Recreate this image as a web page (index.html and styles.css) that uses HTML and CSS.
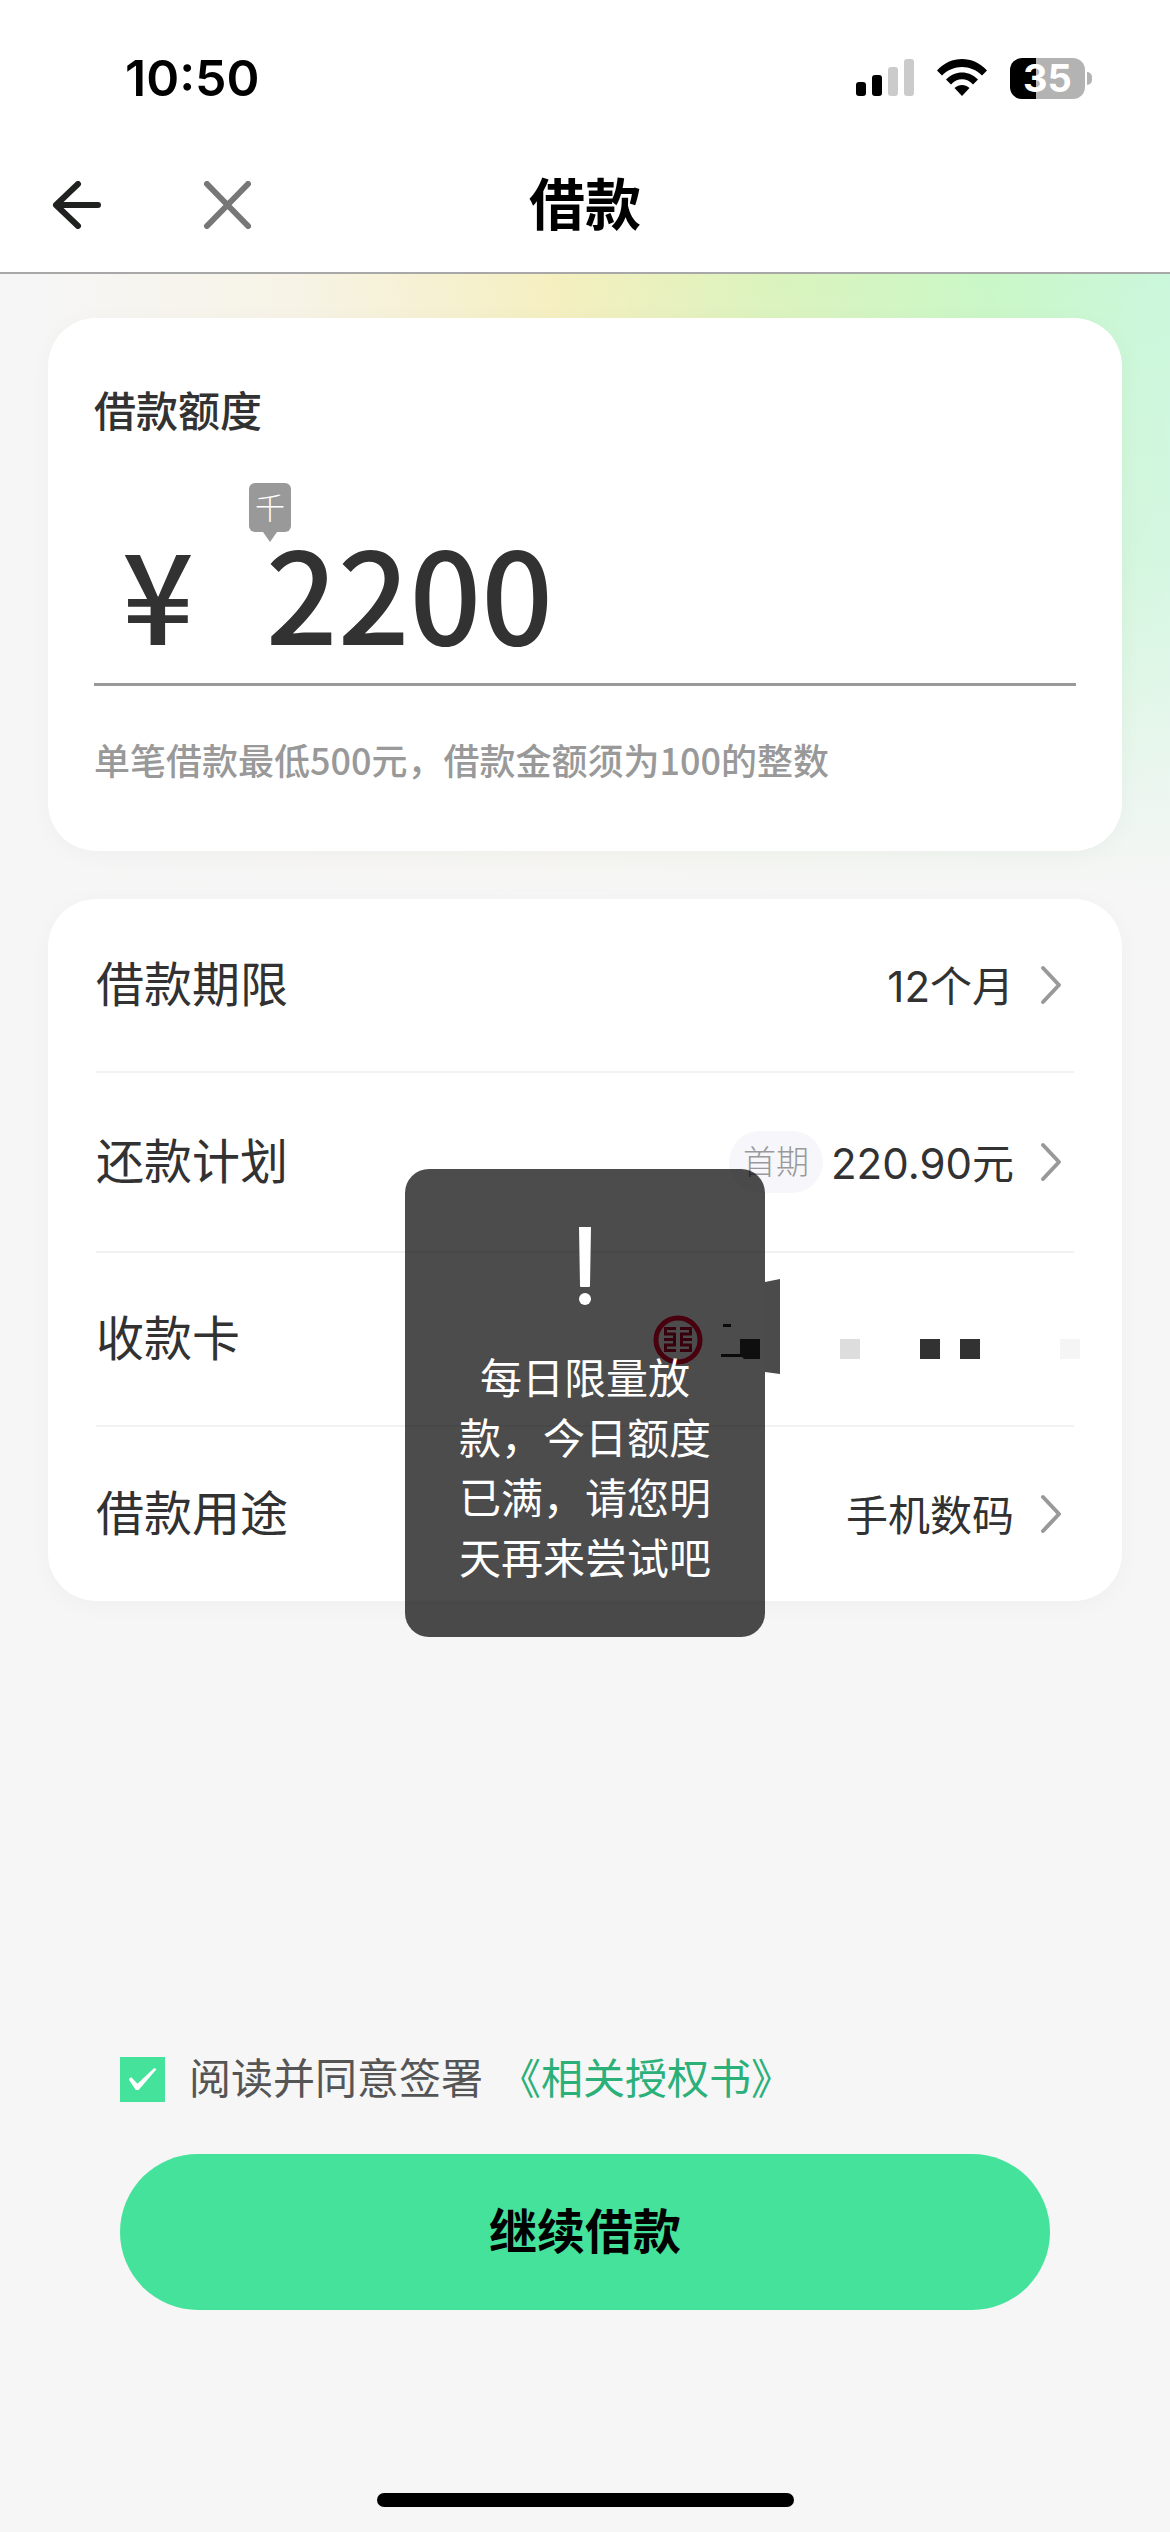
FILE: index.html
```
<!DOCTYPE html>
<html lang="zh-CN">
<head>
<meta charset="utf-8">
<meta name="viewport" content="width=device-width, initial-scale=1">
<title>借款</title>
<link rel="stylesheet" href="styles.css">
</head>
<body>
<header class="top">
  <div class="status">
    <span class="time">10:50</span>
    <div class="status-icons">
      <svg width="58" height="38" viewBox="0 0 58 38" role="img" aria-label="信号">
        <rect x="0" y="23" width="10" height="14" rx="3"/>
        <rect x="16" y="16" width="10" height="21" rx="3"/>
        <rect x="32" y="8" width="10" height="29" rx="3" fill="#cbcbcb"/>
        <rect x="48" y="0" width="10" height="37" rx="3" fill="#cbcbcb"/>
      </svg>
      <svg width="50" height="38" viewBox="0 0 50 38" role="img" aria-label="无线网络">
        <path d="M0 11.500C14-3.800 36-3.800 50 11.500L45 16.500C34 5 16 5 5 16.500Z"/>
        <path d="M9 20.500C18 11 32 11 41 20.500L36 25.500C30 18.500 20 18.500 14 25.500Z"/>
        <path d="M17.500 29C22 25 28 25 32.500 29L25 37Z"/>
      </svg>
      <div class="battery"><span>35</span></div>
    </div>
  </div>
  <nav class="nav">
    <div class="nav-actions">
      <button class="icon-button" aria-label="返回">
        <svg width="52" height="48" viewBox="0 0 52 48" fill="none" stroke="#202220" stroke-width="6" stroke-linecap="round" stroke-linejoin="round"><path d="M28 3 6 24 28 45M6 24H48"/></svg>
      </button>
      <button class="icon-button" aria-label="关闭">
        <svg width="48" height="48" viewBox="0 0 48 48" fill="none" stroke="#777" stroke-width="6" stroke-linecap="round"><path d="M4 3 45 45M45 3 4 45"/></svg>
      </button>
    </div>
    <h1 class="title">借款</h1>
  </nav>
</header>
<main class="page">
  <section class="card amount-card">
    <label class="amount-label" for="amount">借款额度</label>
    <div class="amount">
      <span class="yen">¥</span>
      <span class="unit">千</span>
      <input class="amount-input" id="amount" type="text" inputmode="numeric" value="2200">
    </div>
    <p class="hint">单笔借款最低500元，借款金额须为100的整数</p>
  </section>

  <section class="card">
    <button class="row">
      <span class="row-label">借款期限</span>
      <span class="row-value">12个月</span>
      <svg class="chevron" width="22" height="40" viewBox="0 0 22 40"><path d="M3 3 19 20 3 37"/></svg>
    </button>
    <button class="row row-tall">
      <span class="row-label">还款计划</span>
      <span class="tag">首期</span>
      <span class="row-value">220.90元</span>
      <svg class="chevron" width="22" height="40" viewBox="0 0 22 40"><path d="M3 3 19 20 3 37"/></svg>
    </button>
    <button class="row">
      <span class="row-label">收款卡</span>
      <svg class="bank" width="422" height="60" viewBox="0 0 422 60" role="img" aria-label="银行卡">
        <circle cx="26" cy="31" r="22" fill="none" stroke="#f20030" stroke-width="5"/>
        <path d="M24 19.500H13.500V25H22.500V36H13.500V41.500H24M12 30.500H22M28 19.500H38.500V25H29.500V36H38.500V41.500H28M30 30.500H40" fill="none" stroke="#b80028" stroke-width="3"/>
        <path d="M71 15H79V18H71ZM69 45H92V48H69Z" fill="#222"/>
        <path d="M88 30H108V50H92L88 46ZM268 30H288V50H268ZM308 30H328V50H308Z" fill="#323232"/>
        <path d="M188 30H208V50H188Z" fill="#ddd"/>
        <path d="M408 30H428V50H408Z" fill="#f5f5f5"/>
      </svg>
    </button>
    <button class="row">
      <span class="row-label">借款用途</span>
      <span class="row-value">手机数码</span>
      <svg class="chevron" width="22" height="40" viewBox="0 0 22 40"><path d="M3 3 19 20 3 37"/></svg>
    </button>
  </section>

  <footer class="bottom">
    <div class="agreement">
      <input class="check" id="agree" type="checkbox" checked>
      <label for="agree">阅读并同意签署</label>
      <a href="#agreement">《相关授权书》</a>
    </div>
    <button class="submit">继续借款</button>
    <div class="home-bar"></div>
  </footer>

  <div class="overlay">
    <div class="toast" role="alert">
      <svg width="14" height="80" viewBox="0 0 14 80" fill="#fff" aria-hidden="true"><path d="M1 1H13L12 60Q12 61 11 61H3Q2 61 2 60Z"/><circle cx="7" cy="73" r="6"/></svg>
      <p>每日限量放款，今日额度已满，请您明天再来尝试吧</p>
      <svg class="flap" width="15" height="95" viewBox="0 0 15 95" fill="#4b4b4b" aria-hidden="true"><path d="M0 3 15 0V95L0 93Z"/></svg>
    </div>
  </div>
</main>
</body>
</html>
```
FILE: styles.css
```
* {
  box-sizing: border-box;
}

body {
  margin: 0;
  min-height: 100vh;
  display: flex;
  flex-direction: column;
  background: #f6f6f6;
  color: #323232;
  font-family: Inter, "Noto Sans CJK SC", sans-serif;
}

button {
  border: 0;
  margin: 0;
  padding: 0;
  background: none;
  color: inherit;
  font: inherit;
}

svg {
  display: block;
  flex: none;
}

.top {
  background: #fff;
  border-bottom: 2px solid #a8a8a8;
}

.status {
  display: flex;
  justify-content: space-between;
  align-items: center;
  padding: 48px 78px 22px 125px;
}

.time {
  font-size: 50px;
  line-height: 60px;
  font-weight: 600;
  color: #000;
}

.status-icons {
  display: flex;
  align-items: center;
  gap: 23px;
}

.battery {
  position: relative;
  width: 75px;
  height: 41px;
  margin-right: 7px;
  border-radius: 12px;
  background: linear-gradient(to right, #000 26px, #b3b3b3 26px);
  color: #fff;
  font-size: 38px;
  line-height: 41px;
  font-weight: 700;
  text-align: center;
}

.battery::after {
  content: "";
  position: absolute;
  left: 77px;
  top: 14px;
  width: 5px;
  height: 13px;
  border-radius: 0 5px 5px 0;
  background: #b3b3b3;
}

.nav {
  display: grid;
  grid-template-columns: 1fr auto 1fr;
  align-items: center;
  padding: 34px 50px 26px;
}

.nav-actions {
  display: flex;
  gap: 101px;
}

.title {
  margin: 0;
  font-size: 56px;
  line-height: 82px;
  font-weight: 700;
  color: #000;
}

.page {
  position: relative;
  flex: 1;
  display: flex;
  flex-direction: column;
  gap: 48px;
  padding: 44px 48px 0;
  background:
    linear-gradient(to bottom, transparent 0, rgba(246, 246, 246, 0.2) 280px, #f6f6f6 620px),
    linear-gradient(to right, #f6f6f6 3%, #f7f3e6 25%, #f5efbf 48%, #dcf3bd 65%, #caf7c6 84%, #cbf7dc 100%);
}

.card {
  border-radius: 48px;
  padding: 0 48px;
  background: #fff;
  box-shadow: 0 4px 24px rgba(0, 0, 0, 0.03);
}

.amount-card {
  padding: 64px 46px 65px;
}

.amount-label {
  display: block;
  font-size: 42px;
  line-height: 60px;
  font-weight: 500;
}

.amount {
  position: relative;
  display: flex;
  align-items: center;
  gap: 72px;
  padding: 68px 0 13px 28px;
  border-bottom: 3px solid #999;
  font-family: "Noto Sans CJK SC", sans-serif;
  font-size: 126px;
  line-height: 160px;
  font-weight: 500;
}

.amount-input {
  flex: 1;
  min-width: 0;
  height: 160px;
  border: 0;
  padding: 0;
  outline: 0;
  background: none;
  color: inherit;
  font: inherit;
}

.unit {
  position: absolute;
  left: 155px;
  top: 41px;
  width: 42px;
  height: 49px;
  border-radius: 6px;
  background: #999;
  color: #fff;
  font-size: 30px;
  line-height: 46px;
  font-weight: 300;
  text-align: center;
}

.unit::after {
  content: "";
  position: absolute;
  left: 14px;
  top: 49px;
  border: 7px solid transparent;
  border-top: 10px solid #999;
  border-bottom: 0;
}

.hint {
  margin: 46px 0 0;
  color: #999;
  font-family: "Noto Sans CJK SC", sans-serif;
  font-size: 36px;
  line-height: 54px;
  font-weight: 500;
}

.row {
  width: 100%;
  min-height: 174px;
  display: flex;
  align-items: center;
  border-bottom: 2px solid #f2f2f2;
  text-align: left;
}

.row-tall {
  min-height: 180px;
}

.row:last-child {
  border-bottom: 0;
}

.row-label {
  flex: 1;
  font-size: 48px;
  line-height: 72px;
}

.row-value {
  padding-top: 4px;
  font-size: 42px;
  line-height: 60px;
}

.tag {
  margin-right: 8px;
  padding: 7px 14px;
  border-radius: 31px;
  background: #f7f7fb;
  color: #999;
  font-size: 33px;
  line-height: 48px;
  font-weight: 300;
}

.chevron {
  margin: 0 12px 0 26px;
  fill: none;
  stroke: #999;
  stroke-width: 4;
  stroke-linecap: round;
  stroke-linejoin: round;
}

.bank {
  overflow: visible;
}

.bottom {
  margin-top: auto;
  padding: 0 72px 25px;
}

.agreement {
  display: flex;
  align-items: center;
  margin-bottom: 44px;
  color: #555;
  font-size: 42px;
  line-height: 62px;
}

.agreement a {
  margin-left: 16px;
  color: #2cb07a;
  text-decoration: none;
}

.check {
  appearance: none;
  width: 45px;
  height: 45px;
  margin: 0 24px 0 0;
  display: grid;
  place-items: center;
  background: #45e29b;
}

.check:checked::before {
  content: "";
  width: 28px;
  height: 22px;
  background: #fff;
  clip-path: polygon(0 50%, 10% 42%, 32% 72%, 92% 0, 100% 6%, 36% 100%, 26% 100%);
}

.submit {
  display: block;
  width: 100%;
  border-radius: 78px;
  background: #45e29b;
  color: #000;
  font-size: 48px;
  line-height: 156px;
  font-weight: 700;
  text-align: center;
}

.home-bar {
  width: 417px;
  height: 14px;
  margin: 183px auto 0;
  border-radius: 7px;
  background: #000;
}

.overlay {
  position: absolute;
  inset: 0;
  display: grid;
  place-items: center;
}

.toast {
  position: relative;
  width: 360px;
  padding: 57px 54px 48px;
  border-radius: 24px;
  background: rgba(0, 0, 0, 0.7);
  color: #fff;
  display: flex;
  flex-direction: column;
  align-items: center;
}

.toast p {
  margin: 43px 0 0;
  font-size: 42px;
  line-height: 60px;
  text-align: center;
}

.flap {
  position: absolute;
  left: 100%;
  top: 110px;
}
```
